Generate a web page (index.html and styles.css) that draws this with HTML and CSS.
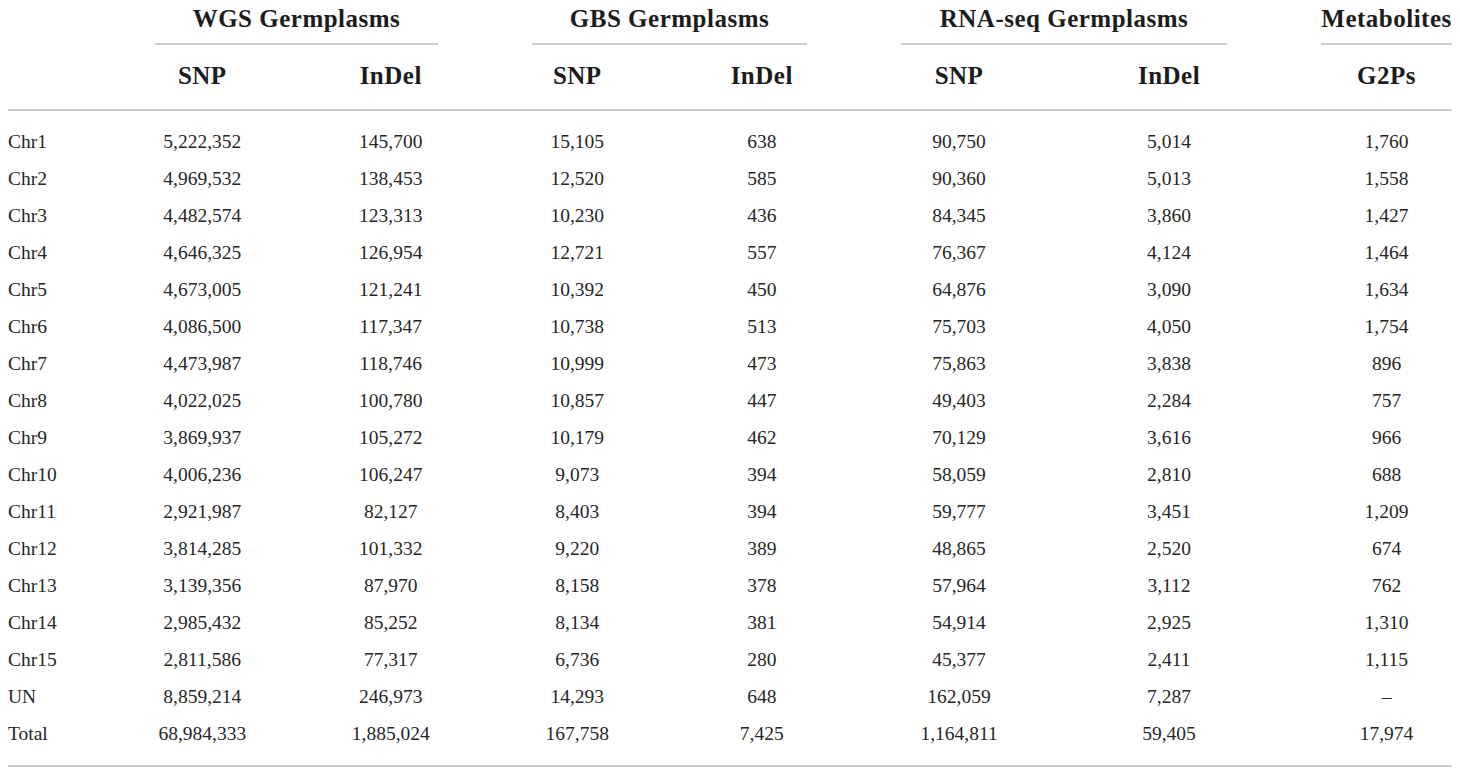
FILE: index.html
```html
<!DOCTYPE html>
<html lang="en">
<head>
<meta charset="utf-8">
<title>Variants and G2Ps per chromosome</title>
<link rel="stylesheet" href="styles.css">
</head>
<body>
<div class="wrap">
<table class="stats">
  <colgroup>
    <col class="c-label"><col class="c-wgs"><col class="c-wgs"><col class="c-gbs"><col class="c-gbs"><col class="c-rna"><col class="c-rna"><col class="c-met">
  </colgroup>
  <thead>
    <tr class="groups">
      <th></th>
      <th colspan="2"><div class="grp">WGS Germplasms</div></th>
      <th colspan="2"><div class="grp">GBS Germplasms</div></th>
      <th colspan="2"><div class="grp">RNA-seq Germplasms</div></th>
      <th class="last"><div class="grp">Metabolites</div></th>
    </tr>
    <tr class="subs">
      <th></th>
      <th>SNP</th><th>InDel</th>
      <th>SNP</th><th>InDel</th>
      <th>SNP</th><th>InDel</th>
      <th class="last">G2Ps</th>
    </tr>
  </thead>
  <tbody>
    <tr><td>Chr1</td><td>5,222,352</td><td>145,700</td><td>15,105</td><td>638</td><td>90,750</td><td>5,014</td><td class="last">1,760</td></tr>
    <tr><td>Chr2</td><td>4,969,532</td><td>138,453</td><td>12,520</td><td>585</td><td>90,360</td><td>5,013</td><td class="last">1,558</td></tr>
    <tr><td>Chr3</td><td>4,482,574</td><td>123,313</td><td>10,230</td><td>436</td><td>84,345</td><td>3,860</td><td class="last">1,427</td></tr>
    <tr><td>Chr4</td><td>4,646,325</td><td>126,954</td><td>12,721</td><td>557</td><td>76,367</td><td>4,124</td><td class="last">1,464</td></tr>
    <tr><td>Chr5</td><td>4,673,005</td><td>121,241</td><td>10,392</td><td>450</td><td>64,876</td><td>3,090</td><td class="last">1,634</td></tr>
    <tr><td>Chr6</td><td>4,086,500</td><td>117,347</td><td>10,738</td><td>513</td><td>75,703</td><td>4,050</td><td class="last">1,754</td></tr>
    <tr><td>Chr7</td><td>4,473,987</td><td>118,746</td><td>10,999</td><td>473</td><td>75,863</td><td>3,838</td><td class="last">896</td></tr>
    <tr><td>Chr8</td><td>4,022,025</td><td>100,780</td><td>10,857</td><td>447</td><td>49,403</td><td>2,284</td><td class="last">757</td></tr>
    <tr><td>Chr9</td><td>3,869,937</td><td>105,272</td><td>10,179</td><td>462</td><td>70,129</td><td>3,616</td><td class="last">966</td></tr>
    <tr><td>Chr10</td><td>4,006,236</td><td>106,247</td><td>9,073</td><td>394</td><td>58,059</td><td>2,810</td><td class="last">688</td></tr>
    <tr><td>Chr11</td><td>2,921,987</td><td>82,127</td><td>8,403</td><td>394</td><td>59,777</td><td>3,451</td><td class="last">1,209</td></tr>
    <tr><td>Chr12</td><td>3,814,285</td><td>101,332</td><td>9,220</td><td>389</td><td>48,865</td><td>2,520</td><td class="last">674</td></tr>
    <tr><td>Chr13</td><td>3,139,356</td><td>87,970</td><td>8,158</td><td>378</td><td>57,964</td><td>3,112</td><td class="last">762</td></tr>
    <tr><td>Chr14</td><td>2,985,432</td><td>85,252</td><td>8,134</td><td>381</td><td>54,914</td><td>2,925</td><td class="last">1,310</td></tr>
    <tr><td>Chr15</td><td>2,811,586</td><td>77,317</td><td>6,736</td><td>280</td><td>45,377</td><td>2,411</td><td class="last">1,115</td></tr>
    <tr><td>UN</td><td>8,859,214</td><td>246,973</td><td>14,293</td><td>648</td><td>162,059</td><td>7,287</td><td class="last">–</td></tr>
    <tr><td>Total</td><td>68,984,333</td><td>1,885,024</td><td>167,758</td><td>7,425</td><td>1,164,811</td><td>59,405</td><td class="last">17,974</td></tr>
  </tbody>
</table>
</div>
</body>
</html>
```

FILE: styles.css
```css
html, body {
  margin: 0;
  padding: 0;
  background: #ffffff;
}

.wrap {
  padding: 0 8px;
}

.stats {
  width: 1444px;
  table-layout: fixed;
  border-collapse: collapse;
  font-family: "Liberation Serif", "Times New Roman", serif;
  color: #262626;
}

.c-label { width: 100px; }
.c-wgs { width: 188.5px; }
.c-gbs { width: 184.5px; }
.c-rna { width: 210px; }
.c-met { width: 178px; }

.stats th {
  font-weight: bold;
  font-size: 25px;
  letter-spacing: 0.5px;
  color: #1c1c1c;
  text-align: center;
  padding: 0;
}

.groups th {
  padding: 0 47px;
}

.groups th.last {
  padding: 0 0 0 47px;
}

.grp {
  line-height: 28px;
  padding: 5px 0 10px;
  border-bottom: 2px solid #cdcdcd;
  white-space: nowrap;
}

.groups th:first-child {
  padding: 0;
}

.subs th {
  line-height: 28px;
  padding: 17px 0 19px;
  border-bottom: 2px solid #cdcdcd;
}

.subs th.last {
  padding-left: 47px;
}

.stats td {
  font-size: 19.5px;
  line-height: 37px;
  height: 37px;
  padding: 0;
  text-align: center;
  white-space: nowrap;
}

.stats td:first-child {
  text-align: left;
}

.stats td.last {
  padding-left: 47px;
}

.stats tbody tr:first-child td {
  padding-top: 12px;
}

.stats tbody tr:last-child td {
  padding-bottom: 13px;
  border-bottom: 2px solid #cdcdcd;
}
```
